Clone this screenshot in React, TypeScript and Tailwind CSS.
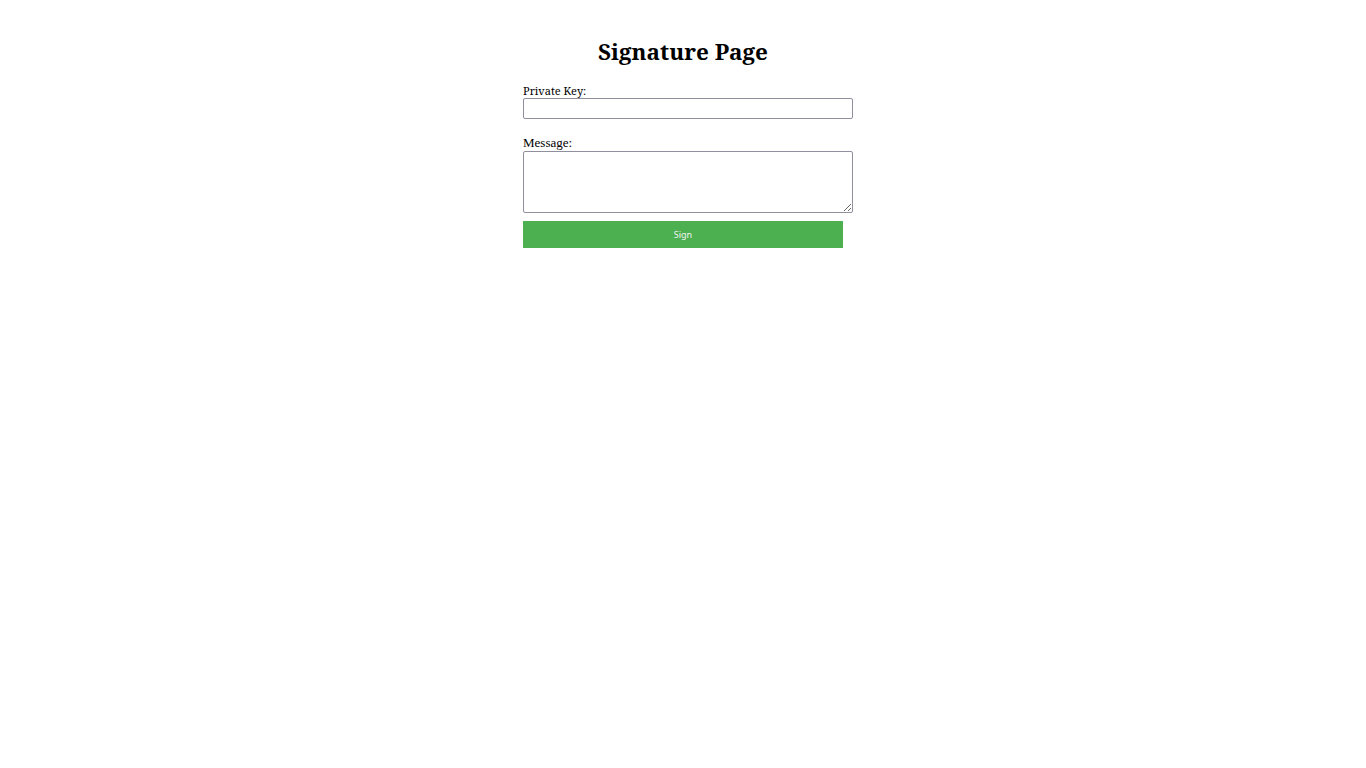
export default function App() {
  return (
    <div className="min-h-screen w-full bg-white text-black font-[serif] flex flex-col items-center pt-[37px]">
      <h2 className="text-[22.5px] font-bold leading-[30px] font-['Noto_Serif',serif]">Signature Page</h2>

      <form className="w-[320px] mt-[16px]" onSubmit={(e) => e.preventDefault()}>
        <label htmlFor="pk" className="block text-[11px] leading-[15px] font-['Noto_Serif',serif]">
          Private Key:
        </label>
        <input
          id="pk"
          type="text"
          className="block w-[330px] h-[21px] border border-[#8f8f9d] rounded-[2px] px-[2px] text-[13px] outline-none"
        />

        <label htmlFor="msg" className="block text-[13px] leading-[14px] mt-[17px] font-['Liberation_Serif',serif]">
          Message:
        </label>
        <textarea
          id="msg"
          className="block w-[330px] h-[62px] mt-[1px] border border-[#8f8f9d] rounded-[2px] px-[2px] text-[13px] outline-none resize"
        />

        <button
          type="submit"
          className="block w-[320px] h-[27px] mt-[8px] bg-[#4CAF50] text-[#f2f2f2] text-[9px] font-['Noto_Sans',sans-serif]"
        >
          Sign
        </button>
      </form>
    </div>
  );
}
